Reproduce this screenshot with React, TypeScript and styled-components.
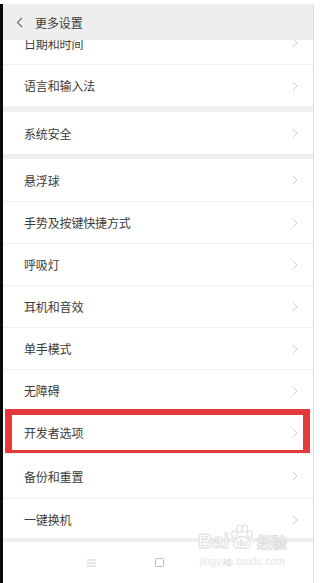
import { FC } from "react"
import styled, { createGlobalStyle } from "styled-components"

const GlobalStyle = createGlobalStyle`
  html, body {
    margin: 0;
    padding: 0;
    background: #ffffff;
  }
  body {
    font-family: "Noto Sans CJK SC", "Noto Sans", sans-serif;
    color: #333333;
  }
  * {
    box-sizing: border-box;
  }
`

const Page = styled.div`
  width: 320px;
  height: 583px;
  padding-top: 4px;
  display: flex;
  background: #ffffff;
  overflow: hidden;
`

const LeftEdge = styled.div`
  width: 3px;
  background: #0a0a0a;
`

const Screen = styled.div`
  position: relative;
  width: 311px;
  display: flex;
  flex-direction: column;
  background: #efefef;
  border-right: 1px solid #dcdcdc;
`

const Header = styled.div`
  position: relative;
  z-index: 1;
  height: 36px;
  flex-shrink: 0;
  display: flex;
  align-items: center;
  gap: 11px;
  padding-left: 13px;
  background: #eeeeee;
`

const Title = styled.span`
  font-size: 12px;
  color: #3a3a3a;
  letter-spacing: -0.1px;
`

const Viewport = styled.div`
  flex: 1;
  overflow: hidden;
  display: flex;
  flex-direction: column;
`

const List = styled.div<{ offset?: number }>`
  display: flex;
  flex-direction: column;
  margin-top: ${({ offset = 0 }) => -offset}px;
`

const Section = styled.div<{ gap?: number }>`
  display: flex;
  flex-direction: column;
  background: #ffffff;
  margin-bottom: ${({ gap = 0 }) => gap}px;
`

const Row = styled.div<{ h?: number }>`
  position: relative;
  flex-shrink: 0;
  height: ${({ h = 42 }) => h}px;
  display: flex;
  align-items: center;
  justify-content: space-between;
  padding: 0 15px 0 21px;
  background: #ffffff;

  & + & {
    border-top: 1px solid #efefef;
  }
`

const Label = styled.span`
  font-size: 12px;
  color: #3b3b3b;
  letter-spacing: -0.15px;
`

const Highlight = styled.div`
  position: absolute;
  top: -3px;
  bottom: -3px;
  left: 2px;
  right: 3px;
  border: 7px solid #e53a3c;
  border-top-width: 6px;
  border-bottom-width: 6px;
  pointer-events: none;
`

const NavBar = styled.div`
  height: 41px;
  flex-shrink: 0;
  margin-top: 4px;
  background: #ffffff;
  display: flex;
  align-items: center;
  justify-content: center;
  gap: 59px;
  padding-left: 2px;
`

const Watermark = styled.div`
  position: absolute;
  right: 26px;
  bottom: 15px;
  display: flex;
  flex-direction: column;
  align-items: center;
  pointer-events: none;
  color: #e4e4e4;
  font-family: "Liberation Sans", Arial, sans-serif;
`

const MarkTop = styled.div`
  display: flex;
  align-items: flex-end;
  gap: 1px;
`

const BaiText = styled.span`
  font-size: 20px;
  font-weight: 700;
  line-height: 19px;
  color: #ffffff;
  -webkit-text-stroke: 1px #dedede;
`

const JingText = styled.span`
  font-family: "Noto Sans CJK SC", sans-serif;
  font-size: 15px;
  font-weight: 700;
  line-height: 18px;
  color: #ffffff;
  -webkit-text-stroke: 1px #dedede;
  margin-left: 2px;
`

const UrlText = styled.span`
  font-size: 10px;
  line-height: 12px;
  margin-top: 5px;
  color: #e4e4e4;
  letter-spacing: 0.3px;
`

const Chevron: FC = () => (
  <svg width="6" height="10" viewBox="0 0 6 10">
    <polyline points="1,1 5,5 1,9" fill="none" stroke="#cfcfcf" strokeWidth="1" />
  </svg>
)

const BackIcon: FC = () => (
  <svg width="8" height="11" viewBox="0 0 8 11">
    <polyline points="6,1 1.5,5.5 6,10" fill="none" stroke="#6a6a6a" strokeWidth="1.1" />
  </svg>
)

const MenuIcon: FC = () => (
  <svg width="9" height="8" viewBox="0 0 9 8">
    <path d="M0 1h9M0 4h9M0 7h9" stroke="#c4c4c4" strokeWidth="0.9" />
  </svg>
)

const HomeIcon: FC = () => (
  <svg width="9" height="9" viewBox="0 0 9 9">
    <rect x="0.5" y="0.5" width="8" height="8" rx="1" fill="none" stroke="#b8b8b8" strokeWidth="1" />
  </svg>
)

const BackNavIcon: FC = () => (
  <svg width="8" height="9" viewBox="0 0 8 9">
    <path d="M7 0.8 L1 4.5 L7 8.2 Z" fill="none" stroke="#d2d2d2" strokeWidth="0.9" />
  </svg>
)

const Paw: FC = () => (
  <svg width="24" height="27" viewBox="0 0 22 24">
    <g fill="#ffffff" stroke="#dedede" strokeWidth="1">
      <ellipse cx="4" cy="9" rx="2.5" ry="3" />
      <ellipse cx="8.5" cy="4" rx="2.5" ry="3.2" />
      <ellipse cx="13.5" cy="4" rx="2.5" ry="3.2" />
      <ellipse cx="18" cy="9" rx="2.5" ry="3" />
      <path d="M11 11 C6 11 3 16 3.5 19 C4 22 8 22 11 21.5 C14 22 18 22 18.5 19 C19 16 16 11 11 11 Z" />
    </g>
    <text
      x="11"
      y="19.5"
      textAnchor="middle"
      fontSize="8"
      fontWeight="700"
      fontFamily="Liberation Sans, Arial, sans-serif"
      fill="#dedede"
    >
      du
    </text>
  </svg>
)

interface Item {
  label: string
  h?: number
  highlighted?: boolean
}

const sections: { items: Item[]; gap: number }[] = [
  { items: [{ label: "日期和时间" }, { label: "语言和输入法" }], gap: 6 },
  { items: [{ label: "系统安全" }], gap: 5 },
  {
    items: [
      { label: "悬浮球" },
      { label: "手势及按键快捷方式" },
      { label: "呼吸灯" },
      { label: "耳机和音效" },
      { label: "单手模式" },
      { label: "无障碍" },
      { label: "开发者选项", highlighted: true },
      { label: "备份和重置", h: 45 },
      { label: "一键换机" },
    ],
    gap: 0,
  },
]

export default function App() {
  return (
    <>
      <GlobalStyle />
      <Page>
        <LeftEdge />
        <Screen>
          <Header>
            <BackIcon />
            <Title>更多设置</Title>
          </Header>
          <Viewport>
            <List offset={18}>
              {sections.map((section, i) => (
                <Section key={i} gap={section.gap}>
                  {section.items.map((item) => (
                    <Row key={item.label} h={item.h}>
                      <Label>{item.label}</Label>
                      <Chevron />
                      {item.highlighted && <Highlight />}
                    </Row>
                  ))}
                </Section>
              ))}
            </List>
          </Viewport>
          <NavBar>
            <MenuIcon />
            <HomeIcon />
            <BackNavIcon />
          </NavBar>
          <Watermark>
            <MarkTop>
              <BaiText>Bai</BaiText>
              <Paw />
              <JingText>经验</JingText>
            </MarkTop>
            <UrlText>jingyan.baidu.com</UrlText>
          </Watermark>
        </Screen>
      </Page>
    </>
  )
}
